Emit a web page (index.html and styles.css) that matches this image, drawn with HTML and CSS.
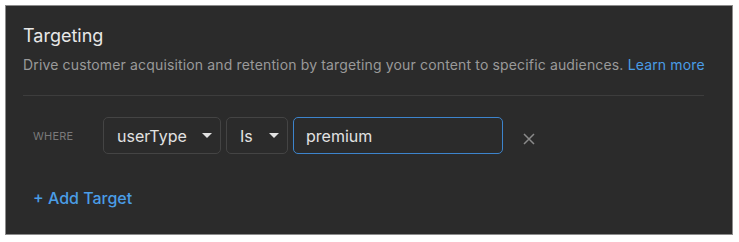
FILE: index.html
```html
<!DOCTYPE html>
<html>
<head>
<meta charset="utf-8">
<link rel="stylesheet" href="styles.css">
</head>
<body>
<section class="panel">
  <div class="content">
    <h2 class="title">Targeting</h2>
    <p class="desc">Drive customer acquisition and retention by targeting your content to specific audiences. <a class="link" href="#">Learn more</a></p>
    <div class="divider"></div>
    <div class="row">
      <span class="where">WHERE</span>
      <div class="select sel-key"><span>userType</span><span class="caret"></span></div>
      <div class="select sel-op"><span>Is</span><span class="caret"></span></div>
      <div class="input">premium</div>
      <svg class="close" width="14" height="14" viewBox="0 0 14 14"><path d="M2 2 L12 12 M12 2 L2 12" stroke="#8a8a8a" stroke-width="1.5" fill="none"/></svg>
    </div>
    <div class="add">+ Add Target</div>
  </div>
</section>
</body>
</html>
```
FILE: styles.css
```css
html, body { margin: 0; padding: 0; background: #ffffff; }
body { padding: 5px 6px 6px 5px; font-family: Inter, "Noto Sans", sans-serif; }
.panel {
  background: #2b2b2b;
  border: 1px solid #8c8c8c;
  height: 230px;
  box-sizing: border-box;
  padding: 18px 28px 0 17px;
}
.title {
  margin: 0;
  font-size: 18px;
  line-height: 24px;
  font-weight: 400;
  color: #e8e8e8;
}
.desc {
  margin: 7px 0 0;
  font-size: 14px;
  line-height: 20px;
  color: #9a9a9a;
  white-space: nowrap;
  letter-spacing: 0.15px;
}
.link { color: #4a9de6; text-decoration: none; }
.divider { height: 1px; background: #3d3d3d; margin-top: 20px; }
.row {
  display: flex;
  align-items: center;
  margin-top: 21px;
  padding-left: 10px;
}
.where {
  font-size: 11px;
  color: #7a7a7a;
  width: 70px;
  letter-spacing: 0.2px;
}
.select, .input {
  height: 37px;
  box-sizing: border-box;
  border: 1px solid #444444;
  border-radius: 5px;
  display: flex;
  align-items: center;
  font-size: 16px;
  color: #e2e2e2;
}
.select { justify-content: space-between; padding: 0 8px 0 13px; margin-right: 5px; }
.sel-key { width: 118px; }
.sel-op { width: 62px; }
.caret {
  width: 0; height: 0;
  border-left: 5px solid transparent;
  border-right: 5px solid transparent;
  border-top: 5px solid #e2e2e2;
}
.input {
  width: 210px;
  border-color: #3d84cc;
  padding: 0 12px;
}
.close { margin-left: 19px; margin-top: 6px; }
.add {
  margin-top: 34px;
  padding-left: 10px;
  font-size: 16px;
  line-height: 20px;
  font-weight: 500;
  color: #4a9de6;
}
```
